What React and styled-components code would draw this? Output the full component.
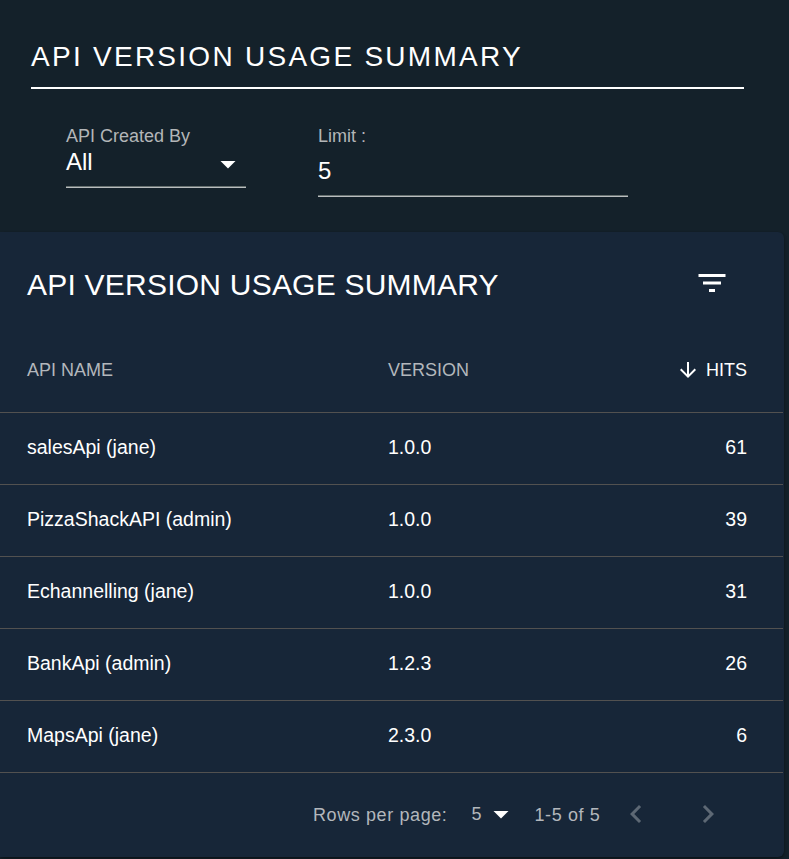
import React from "react";
import styled, { createGlobalStyle } from "styled-components";

const GlobalStyle = createGlobalStyle`
  * { box-sizing: border-box; }
  body {
    margin: 0;
    background: #14212a;
    color: #fff;
    font-family: "Liberation Sans", Arial, sans-serif;
    overflow: hidden;
  }
`;

const Page = styled.main`
  height: 859px;
  overflow: hidden;
`;

const Heading = styled.h3`
  width: 713px;
  height: 89px;
  margin: 0 0 0 31px;
  padding-top: 41px;
  border-bottom: 2px solid #fff;
  font-size: 28px;
  line-height: 32px;
  font-weight: 400;
  letter-spacing: 2.27px;
  white-space: nowrap;
`;

const Filters = styled.form`
  display: flex;
  align-items: flex-start;
  gap: 72px;
  height: 143px;
  padding: 36px 0 0 66px;
`;

const Field = styled.div`
  width: ${(p) => p.$width}px;
  height: ${(p) => p.$height}px;
  display: flex;
  flex-direction: column;
  border-bottom: 1px solid #b9bdbf;
  box-shadow: inset 0 -1px 0 #66706f;
`;

const Label = styled.label`
  font-size: 18px;
  line-height: 22px;
  color: #b3b6b8;
`;

const Value = styled.div`
  display: flex;
  justify-content: space-between;
  align-items: flex-start;
  height: 28px;
  margin-top: ${(p) => p.$top || 0}px;
  font-size: 24px;
  line-height: 28px;
`;

const Icon = styled.svg`
  display: block;
  flex: none;
  width: ${(p) => p.$size || 36}px;
  height: ${(p) => p.$size || 36}px;
  margin-top: ${(p) => p.$shift || 0}px;
  fill: ${(p) => p.$color || "#fff"};
`;

const Panel = styled.section`
  width: 784px;
  height: 625px;
  background: #172638;
  border-radius: 0 6px 6px 0;
  box-shadow: 0 3px 5px -2px rgba(0, 0, 0, 0.35), 0 1px 3px rgba(0, 0, 0, 0.3);
`;

const Toolbar = styled.header`
  display: flex;
  justify-content: space-between;
  align-items: center;
  height: 96px;
  padding: 6px 54px 0 27px;
`;

const Title = styled.h6`
  margin: 0;
  padding-top: 4px;
  font-size: 30px;
  font-weight: 400;
  line-height: 48px;
  letter-spacing: 0.225px;
`;

const Row = styled.div`
  display: grid;
  grid-template-columns: 361px 1fr auto;
  align-items: center;
  width: 783px;
  height: ${(p) => (p.$head ? 85 : 72)}px;
  padding: 0 36px ${(p) => (p.$head ? 0 : 2)}px 27px;
  border-bottom: 1px solid #525150;
  font-size: ${(p) => (p.$head ? 18 : 19.5)}px;
`;

const Cell = styled.span`
  display: flex;
  align-items: center;
  gap: 6px;
  color: ${(p) => (p.$muted ? "#b3b7bc" : "#fff")};
`;

const Pagination = styled.footer`
  display: flex;
  align-items: center;
  height: 84px;
  padding-left: 313px;
  font-size: 18px;
  letter-spacing: 0.6px;
  color: #b3b7bc;
  white-space: nowrap;
`;

const PageLabel = styled.span`
  width: 158.5px;
  padding-top: 1px;
`;

const PageSize = styled.span`
  display: flex;
  align-items: center;
  gap: 0.9px;
  width: 63px;
  height: 36px;
  margin-top: -2px;
`;

const Range = styled.span`
  width: 65.5px;
  padding-top: 1px;
`;

const PageButton = styled.button`
  display: grid;
  place-items: center;
  width: 72px;
  height: 72px;
  padding: 0 0 2px;
  border: 0;
  background: none;
`;

const rows = [
  ["salesApi (jane)", "1.0.0", 61],
  ["PizzaShackAPI (admin)", "1.0.0", 39],
  ["Echannelling (jane)", "1.0.0", 31],
  ["BankApi (admin)", "1.2.3", 26],
  ["MapsApi (jane)", "2.3.0", 6],
];

const Glyph = ({ d, size, color, shift }) => (
  <Icon viewBox="0 0 24 24" $size={size} $color={color} $shift={shift} aria-hidden="true">
    <path d={d} />
  </Icon>
);

const caret = "M7 10l5 5 5-5z";

export default function App() {
  return (
    <Page>
      <GlobalStyle />
      <Heading>API VERSION USAGE SUMMARY</Heading>
      <Filters>
        <Field $width={180} $height={63}>
          <Label>API Created By</Label>
          <Value $top={1}>
            All
            <Glyph d={caret} shift={-2} />
          </Value>
        </Field>
        <Field $width={310} $height={72}>
          <Label>Limit :</Label>
          <Value $top={10}>5</Value>
        </Field>
      </Filters>
      <Panel>
        <Toolbar>
          <Title>API VERSION USAGE SUMMARY</Title>
          <Glyph d="M10 18h4v-2h-4v2zM3 6v2h18V6H3zm3 7h12v-2H6v2z" />
        </Toolbar>
        <Row $head>
          <Cell $muted>API NAME</Cell>
          <Cell $muted>VERSION</Cell>
          <Cell>
            <Glyph
              size={24}
              d="M20 12l-1.41-1.41L13 16.17V4h-2v12.17l-5.58-5.59L4 12l8 8 8-8z"
            />
            HITS
          </Cell>
        </Row>
        {rows.map(([name, version, hits]) => (
          <Row key={name}>
            <Cell>{name}</Cell>
            <Cell>{version}</Cell>
            <Cell>{hits}</Cell>
          </Row>
        ))}
        <Pagination>
          <PageLabel>Rows per page:</PageLabel>
          <PageSize>
            5
            <Glyph d={caret} />
          </PageSize>
          <Range>1-5 of 5</Range>
          <PageButton type="button" aria-label="Previous page" disabled>
            <Glyph color="#5d6874" d="M15.41 7.41L14 6l-6 6 6 6 1.41-1.41L10.83 12z" />
          </PageButton>
          <PageButton type="button" aria-label="Next page" disabled>
            <Glyph color="#5d6874" d="M10 6L8.59 7.41 13.17 12l-4.58 4.59L10 18l6-6z" />
          </PageButton>
        </Pagination>
      </Panel>
    </Page>
  );
}
